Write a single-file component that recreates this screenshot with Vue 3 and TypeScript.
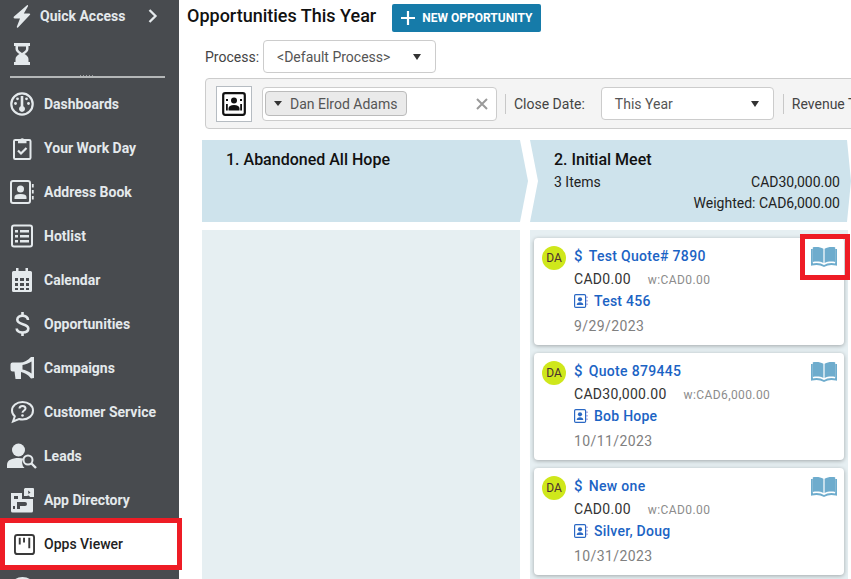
<script setup lang="ts">
interface NavItem { label: string; icon: string; active?: boolean }
const nav: NavItem[] = [
  { label: 'Dashboards', icon: 'dash' },
  { label: 'Your Work Day', icon: 'clip' },
  { label: 'Address Book', icon: 'addr' },
  { label: 'Hotlist', icon: 'list' },
  { label: 'Calendar', icon: 'cal' },
  { label: 'Opportunities', icon: 'dollar' },
  { label: 'Campaigns', icon: 'horn' },
  { label: 'Customer Service', icon: 'help' },
  { label: 'Leads', icon: 'lead' },
  { label: 'App Directory', icon: 'app' },
  { label: 'Opps Viewer', icon: 'board', active: true },
  { label: '', icon: 'help' },
]
interface Card { title: string; amount: string; weighted: string; contact: string; date: string; marked?: boolean }
const cards: Card[] = [
  { title: 'Test Quote# 7890', amount: 'CAD0.00', weighted: 'w:CAD0.00', contact: 'Test 456', date: '9/29/2023', marked: true },
  { title: 'Quote 879445', amount: 'CAD30,000.00', weighted: 'w:CAD6,000.00', contact: 'Bob Hope', date: '10/11/2023' },
  { title: 'New one', amount: 'CAD0.00', weighted: 'w:CAD0.00', contact: 'Silver, Doug', date: '10/31/2023' },
]
</script>

<template>
  <div class="page">
    <aside class="side">
      <div class="quick">
        <svg class="bolt" viewBox="0 0 18 23"><path d="M14 .3 1 11.500Q-.200 13 2 13.500H7L3.800 21.800Q3.800 23.300 5 22.500L17 9.800Q17.800 8.500 16 8.500H10.800L15 1.200Q15.200-.500 14 .3z" fill="#e4e9ec"/></svg>
        <span class="quick-label">Quick Access</span>
        <svg class="chev" viewBox="0 0 10 14"><path d="M1.500 1 7.500 7l-6 6" fill="none" stroke="#e4e9ec" stroke-width="2.300"/></svg>
      </div>
      <div class="hour">
        <svg viewBox="0 0 16 22" width="16" height="22"><path d="M0 0h16v3h-1.500v3c0 2.500-2.500 4-4 5 1.500 1 4 2.500 4 5v3H16v3H0v-3h1.500v-3c0-2.500 2.500-4 4-5-1.500-1-4-2.500-4-5V3H0z" fill="#e4e9ec"/><path d="M4 3.500h8V6c0 1-2 3-4 4-2-1-4-3-4-4z" fill="#484b4f"/></svg>
      </div>
      <div class="divider"></div>
      <nav class="nav">
        <div v-for="n in nav" :key="n.label" class="item" :class="{ active: n.active }">
          <span class="ico">
            <svg v-if="n.icon === 'dash'" viewBox="0 0 24 24" width="24" height="24"><circle cx="12" cy="12" r="10.700" fill="none" stroke="currentColor" stroke-width="2.200"/><path d="M10.700 4h2.600v10.300a3 3 0 1 1-2.600 0z" fill="currentColor"/><circle cx="5.500" cy="11.500" r="1.400" fill="currentColor"/><circle cx="18.500" cy="11.500" r="1.400" fill="currentColor"/><circle cx="7.500" cy="6.800" r="1.400" fill="currentColor"/><circle cx="16.500" cy="6.800" r="1.400" fill="currentColor"/></svg>
            <svg v-else-if="n.icon === 'clip'" viewBox="0 0 24 24" width="24" height="24"><rect x="4" y="4" width="16.500" height="19" rx="1.200" fill="none" stroke="currentColor" stroke-width="2"/><path d="M8 3h2.500a2.200 2.200 0 0 1 3.500 0h2.500v4.200H8z" fill="currentColor"/><path d="m8 14.500 3 3 5.500-5.500" fill="none" stroke="currentColor" stroke-width="2.200"/></svg>
            <svg v-else-if="n.icon === 'addr'" viewBox="0 0 24 24" width="24" height="24"><rect x="1" y="1" width="19" height="22" rx="2" fill="none" stroke="currentColor" stroke-width="2"/><circle cx="10.500" cy="9" r="3.500" fill="currentColor"/><path d="M4.500 19v-2c0-2 2-3 6-3s6 1 6 3v2z" fill="currentColor"/><path d="M22.800 4v3.500M22.800 10v3.500M22.800 16v3.500" stroke="currentColor" stroke-width="1.800"/></svg>
            <svg v-else-if="n.icon === 'list'" viewBox="0 0 24 24" width="24" height="24"><rect x="2" y="1.500" width="20" height="21" rx="2" fill="none" stroke="currentColor" stroke-width="2"/><path d="M5 6h3v2.500H5zM5 11h3v2.500H5zM5 16h3v2.500H5zM10 6h9v2.500h-9zM10 11h9v2.500h-9zM10 16h9v2.500h-9z" fill="currentColor"/></svg>
            <svg v-else-if="n.icon === 'cal'" viewBox="0 0 24 24" width="24" height="24"><path fill-rule="evenodd" d="M6 0h2.500v3h7V0H18v3h2.500A1.500 1.500 0 0 1 22 4.500v18a1.500 1.500 0 0 1-1.500 1.500h-17A1.500 1.500 0 0 1 2 22.500v-18A1.500 1.500 0 0 1 3.500 3H6zM5 10v3h3v-3zm5 0v3h4v-3zm6 0v3h3v-3zM5 15v3h3v-3zm5 0v3h4v-3zm6 0v3h3v-3zM5 20v2h3v-2zm5 0v2h4v-2zm6 0v2h3v-2z" fill="currentColor"/></svg>
            <svg v-else-if="n.icon === 'dollar'" viewBox="0 0 24 24" width="24" height="24"><path d="M18 8C18 5.200 15.500 3.800 12.500 3.800S7.300 5.200 7.300 7.800c0 5.700 11 3 11 8.700 0 2.700-2.600 4-5.800 4s-5.800-1.300-5.800-4" fill="none" stroke="currentColor" stroke-width="2.600"/><path d="M11.200 0h2.600v4h-2.600zM11.200 20h2.600v4h-2.600z" fill="currentColor"/></svg>
            <svg v-else-if="n.icon === 'horn'" viewBox="0 0 24 24" width="24" height="24"><path d="M24 1v21l-3 .500c-3-4-7-6-10-6.500v7H5.500l-1-7.500H2.500A2 2 0 0 1 .500 13.500v-5A2 2 0 0 1 2.500 6.500H10c4 0 8-2 11-5.500z" fill="currentColor"/><path d="M21.500 5.500v12c-3-2-6-3.500-9-4V9c3-.500 6-1.500 9-3.500z" fill="#484b4f"/></svg>
            <svg v-else-if="n.icon === 'help'" viewBox="0 0 24 24" width="24" height="24"><path d="M12.500 2C6.500 2 2 5.800 2 10.500c0 2.300 1 4.300 2.800 5.800L3 21.500l6-2.500c1 .300 2.300.500 3.500.500 6 0 10.500-4 10.500-9S18.500 2 12.500 2z" fill="none" stroke="currentColor" stroke-width="2"/><path d="M9.500 8.500c0-1.500 1.300-2.500 3-2.500s3 1 3 2.500c0 2-3 2-3 4.300" fill="none" stroke="currentColor" stroke-width="2"/><circle cx="12.500" cy="15.500" r="1.300" fill="currentColor"/></svg>
            <svg v-else-if="n.icon === 'lead'" viewBox="0 0 30 26" width="30" height="26"><circle cx="11.500" cy="7" r="6.500" fill="currentColor"/><path d="M0 25v-3c0-5 5-7 11.500-7 2 0 3.500.200 5 .600a7.500 7.500 0 0 0 1 9.400z" fill="currentColor"/><circle cx="21" cy="17" r="4.500" fill="none" stroke="currentColor" stroke-width="2"/><path d="m24.500 20.500 4.500 4.500" stroke="currentColor" stroke-width="2.400"/></svg>
            <svg v-else-if="n.icon === 'app'" viewBox="0 0 24 26" width="24" height="26"><path d="M1 6h11v6h11v12a1.500 1.500 0 0 1-1.500 1.500H2.500A1.500 1.500 0 0 1 1 24z" fill="currentColor"/><path d="M15 1h8a1 1 0 0 1 1 1v8h-4a2 2 0 0 0-3-1h-3V2z" fill="currentColor"/><path d="M4 9h4v3H4zM18 3.500l2.500 2-2 1.500zM10 15h5a2 2 0 0 1 0 4h-5v3H7v-7zM3 19h2v3H3z" fill="#484b4f"/></svg>
            <svg v-else viewBox="0 0 22 22" width="21" height="21"><rect x="1" y="1" width="20" height="20" rx="2.500" fill="none" stroke="#3a3a3a" stroke-width="2"/><path d="M6 4v7M10.500 4v5M16 4v11" stroke="#3a3a3a" stroke-width="2"/></svg>
          </span>
          <span class="label">{{ n.label }}</span>
        </div>
      </nav>
    </aside>

    <main class="main">
      <header class="title-row">
        <h1 class="title">Opportunities This Year</h1>
        <button class="new-btn">
          <svg viewBox="0 0 14 14" width="14" height="14"><path d="M7 0v14M0 7h14" stroke="#fff" stroke-width="2.200"/></svg>
          NEW OPPORTUNITY
        </button>
      </header>

      <div class="process-row">
        <label class="field-label">Process:</label>
        <div class="select process"><span>&lt;Default Process&gt;</span><i class="caret"></i></div>
      </div>

      <div class="filters">
        <div class="people">
          <svg viewBox="0 0 24 24" width="24" height="24"><rect x="1.200" y="1.200" width="21.600" height="21.600" rx="2" fill="none" stroke="#111" stroke-width="2.200"/><circle cx="12" cy="8.500" r="3" fill="#111"/><path d="M6.500 18.500v-2c0-2.300 2-3.500 5.500-3.500s5.500 1.200 5.500 3.500v2z" fill="#111"/><path d="M4 7h2v2H4zM18 7h2v2h-2zM4 12h1.800v6.500H4zM18.200 12H20v6.500h-1.800z" fill="#111"/></svg>
        </div>
        <div class="tagbox">
          <span class="tag"><i class="caret small"></i>Dan Elrod Adams</span>
          <svg class="clear" viewBox="0 0 12 12" width="12" height="12"><path d="m1 1 10 10M11 1 1 11" stroke="#9a9a9a" stroke-width="2"/></svg>
        </div>
        <span class="sep"></span>
        <span class="field-label">Close Date:</span>
        <div class="select date"><span>This Year</span><i class="caret"></i></div>
        <span class="sep"></span>
        <span class="field-label revenue">Revenue Type:</span>
      </div>

      <section class="board">
        <div class="stage first">
          <div class="stage-head one"><h2>1. Abandoned All Hope</h2></div>
          <div class="stage-body"></div>
        </div>
        <div class="stage second">
          <div class="stage-head two">
            <h2>2. Initial Meet</h2>
            <div class="stat"><span>3 Items</span><span>CAD30,000.00</span></div>
            <div class="stat end"><span>Weighted: CAD6,000.00</span></div>
          </div>
          <div class="stage-body cards">
            <article v-for="c in cards" :key="c.title" class="card">
              <span class="avatar">DA</span>
              <div class="info">
                <div class="name"><span class="dollar">$</span>{{ c.title }}</div>
                <div class="money"><span>{{ c.amount }}</span><small>{{ c.weighted }}</small></div>
                <div class="contact">
                  <svg viewBox="0 0 14 14" width="14" height="14"><rect x=".600" y=".600" width="11" height="12.800" rx="1.200" fill="none" stroke="#2a68c4" stroke-width="1.200"/><circle cx="6" cy="5.300" r="2.100" fill="#2a68c4"/><path d="M2.700 11c0-1.800 1.300-2.700 3.300-2.700s3.300.900 3.300 2.700z" fill="#2a68c4"/><path d="M13 2.500v1.500M13 6v1.500M13 9.500V11" stroke="#7d6fd0" stroke-width="1"/></svg>
                  {{ c.contact }}
                </div>
                <div class="date-text">{{ c.date }}</div>
              </div>
              <span class="book" :class="{ marked: c.marked }">
                <svg viewBox="0 0 26 21" width="26" height="21"><path d="M1.800 1.300C5.500 .600 9.500 .900 12.400 2.800V17C9.500 15.500 5.500 15.200 1.800 16z M13.600 2.800C16.500 .900 20.500 .600 24.200 1.300V16C20.500 15.200 16.500 15.500 13.600 17z" fill="#6eaccd"/><path d="M.900 3V18.600C4.500 17.700 9.500 17.900 13 20 16.500 17.900 21.500 17.700 25.100 18.600V3" fill="none" stroke="#6eaccd" stroke-width="1.800"/></svg>
              </span>
            </article>
          </div>
        </div>
      </section>
    </main>
  </div>
</template>

<style scoped>
.page { display: flex; width: 851px; height: 579px; overflow: hidden; background: #fff; font-family: Roboto, "Liberation Sans", sans-serif; color: #333; }
.side { width: 179px; flex: none; background: #484b4f; color: #e4e9ec; }
.quick { height: 32px; display: flex; align-items: center; padding-left: 13px; }
.bolt { width: 18px; height: 23px; }
.quick-label { font-size: 14px; font-weight: 700; margin-left: 9px; width: 100px; white-space: nowrap; }
.chev { width: 10px; height: 14px; margin-left: 8px; }
.hour { height: 33px; margin-top: 11px; padding-left: 14px; }
.divider { height: 2px; margin-left: 10px; width: 155px; background: #b4b7b8; position: relative; }
.divider::after { content: ""; position: absolute; left: 70px; top: -1px; width: 14px; height: 1px; background: repeating-linear-gradient(90deg, #9a9c9e 0 1px, transparent 1px 3px); }
.nav { margin-top: 4px; }
.item { height: 44px; display: flex; align-items: center; font-size: 14px; font-weight: 700; }
.ico { width: 44px; flex: none; display: flex; justify-content: center; }
.label { white-space: nowrap; }
.item.active { width: 182px; height: 52px; margin: -4px 0; position: relative; z-index: 1; background: #fff; color: #222; border: 5px solid #ee1c25; box-sizing: border-box; font-weight: 500; }
.item.active .ico { width: 39px; }
.main { flex: 1; min-width: 0; display: flex; flex-direction: column; }
.title-row { display: flex; align-items: flex-start; gap: 15px; padding: 4px 0 0 8px; height: 28px; flex: none; }
.title { margin: 0; font-size: 18px; font-weight: 500; line-height: 24px; color: #111; white-space: nowrap; }
.new-btn { height: 28px; width: 149px; margin-left: 1px; border: 0; border-radius: 2px; background: #167ba9; color: #fff; font: 700 12px Roboto, sans-serif; display: flex; align-items: center; gap: 7px; padding: 0 0 0 9px; white-space: nowrap; }
.process-row { display: flex; align-items: center; gap: 4px; margin: 8px 0 0 26px; flex: none; }
.field-label { font-size: 14px; color: #444; white-space: nowrap; }
.select { height: 33px; box-sizing: border-box; border: 1px solid #ccc; border-radius: 4px; background: #fff; display: flex; align-items: center; justify-content: space-between; font-size: 14px; color: #555; }
.process { width: 173px; padding: 0 14px 0 13px; }
.date { width: 173px; padding: 0 14px 0 13px; margin-left: 16px; flex: none; }
.caret { display: block; width: 0; height: 0; border-left: 4px solid transparent; border-right: 4px solid transparent; border-top: 6px solid #333; }
.caret.small { border-top-width: 5px; margin-right: 8px; }
.filters { margin: 5px -40px 0 26px; height: 51px; flex: none; box-sizing: border-box; background: #f4f4f4; border: 1px solid #ccc; border-radius: 4px; display: flex; align-items: center; padding-left: 10px; white-space: nowrap; }
.people { width: 36px; height: 36px; box-sizing: border-box; border: 1px solid #b6bcc2; background: #fff; display: flex; align-items: center; justify-content: center; flex: none; }
.tagbox { width: 235px; height: 34px; box-sizing: border-box; margin-left: 10px; border: 1px solid #ccc; border-radius: 4px; background: #fff; display: flex; align-items: center; justify-content: space-between; padding: 0 8px 0 2px; flex: none; }
.tag { height: 25px; box-sizing: border-box; padding: 0 9px 0 8px; display: flex; align-items: center; background: #eaeaea; border: 1px solid #bbb; border-radius: 4px; font-size: 14px; color: #555; }
.sep { width: 1px; height: 20px; background: #c8c8c8; margin: 0 8px; flex: none; }
.date + .sep { margin: 0 8px 0 9px; }
.board { margin: 11px 0 0 23px; display: flex; gap: 2px; flex: none; }
.stage { flex: none; }
.first { width: 326px; }
.second { width: 321px; }
.stage-head { height: 82px; background: #cee3ec; box-sizing: border-box; color: #111; }
.stage-head h2 { margin: 0; font-size: 16px; font-weight: 500; line-height: 20px; }
.one { padding: 10px 0 0 24px; clip-path: polygon(0 0, 318px 0, 326px 50%, 318px 100%, 0 100%); }
.two { padding: 10px 11px 0 24px; clip-path: polygon(0 0, 317px 0, 321px 50%, 317px 100%, 0 100%, 8px 50%); font-size: 14px; }
.stat { display: flex; justify-content: space-between; line-height: 21px; margin-top: 2px; color: #222; }
.stat.end { justify-content: flex-end; margin-top: 0; }
.stage-body { margin-top: 8px; height: 360px; background: #e6eff2; width: 318px; }
.cards { padding: 8px 4px; box-sizing: border-box; display: flex; flex-direction: column; gap: 8px; }
.card { height: 107px; flex: none; box-sizing: border-box; background: #fff; border-radius: 4px; box-shadow: 0 1px 4px rgba(0,0,0,.3); position: relative; display: flex; padding: 8px; }
.avatar { width: 24px; height: 24px; border-radius: 50%; background: #cfe71b; color: #4a3030; font-size: 12px; display: flex; align-items: center; justify-content: center; flex: none; }
.info { margin-left: 8px; min-width: 0; }
.name { font-size: 14px; font-weight: 500; color: #1b63c4; line-height: 20px; letter-spacing: .3px; white-space: nowrap; }
.dollar { margin-right: 6px; font-size: 15px; }
.money { display: flex; align-items: baseline; gap: 17px; line-height: 22px; margin-top: 2px; font-size: 14px; color: #333; letter-spacing: .3px; white-space: nowrap; }
.money small { font-size: 12px; color: #8c8c8c; letter-spacing: .4px; }
.contact { display: flex; align-items: center; gap: 6px; font-size: 14px; font-weight: 500; color: #1b63c4; line-height: 22px; margin-top: -1px; letter-spacing: .25px; white-space: nowrap; }
.date-text { font-size: 14px; color: #808080; line-height: 22px; margin-top: 3px; letter-spacing: .4px; }
.book { position: absolute; top: 8px; right: 7px; line-height: 0; }
.book.marked { top: -4px; right: -6px; width: 50px; height: 46px; box-sizing: border-box; border: 5px solid #ee1c25; padding: 7px 0 0 6px; }
</style>
